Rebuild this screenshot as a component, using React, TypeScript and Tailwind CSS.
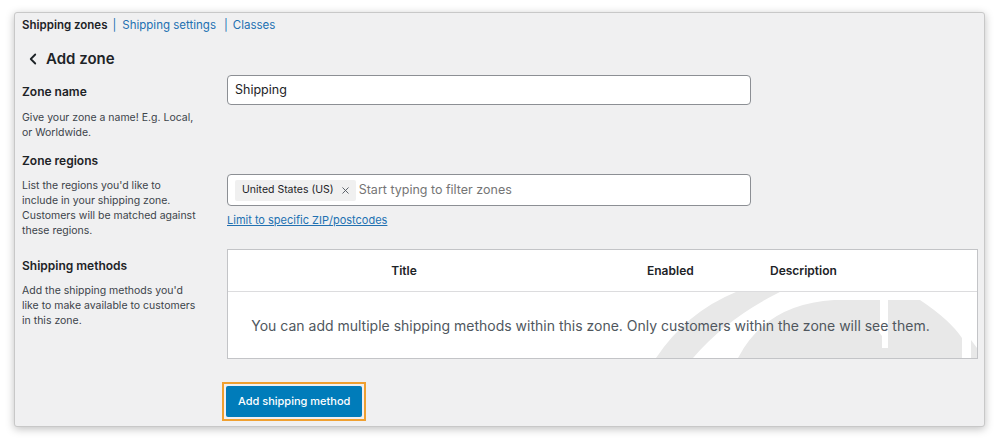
import { ChevronLeft, X } from 'lucide-react'

const font = { fontFamily: 'Inter, "Noto Sans", sans-serif' }

function Watermark() {
  // faint shipping globe behind the empty-state text, coords relative to table body
  return (
    <svg
      className="absolute inset-0 h-full w-full pointer-events-none"
      viewBox="0 0 749 66"
      preserveAspectRatio="none"
    >
      <g fill="#e8e8e8">
        <path d="M428 66 Q460 18 513 -2 L556 -2 Q500 25 465 66 Z" />
        <path d="M510 66 Q538 12 606 8 L652 8 L652 30 Q648 38 654 44 L654 56 L660 56 L660 8 L692 8 Q722 28 734 46 L734 66 Z" />
        <path d="M743 48 L749 56 L749 66 L743 66 Z" />
      </g>
    </svg>
  )
}

export default function App() {
  return (
    <div className="w-[1000px] h-[438px] bg-white pt-3 pl-[14px] text-[#1d2327]" style={font}>
      <div className="w-[971px] h-[415px] bg-[#f0f0f1] border border-[#c8c8c8] rounded-[3px] shadow-[0_2px_8px_rgba(0,0,0,0.25)] pl-[7px] pr-[7px]">
        <div className="flex items-center h-[24px] text-[11.5px] pt-[1px]">
          <span className="font-semibold">Shipping zones</span>
          <span className="ml-[5px] mr-[6px] text-[#2271b1]">|</span>
          <span className="text-[#2271b1]">Shipping settings</span>
          <span className="ml-[8px] mr-[5px] text-[#2271b1]">|</span>
          <span className="text-[#2271b1]">Classes</span>
        </div>

        <div className="flex items-center mt-[11px] h-[22px]">
          <ChevronLeft size={18} strokeWidth={2.4} className="ml-[2px] text-[#1d2327]" />
          <span className="ml-[4px] text-[15px] font-semibold">Add zone</span>
        </div>

        <div className="flex mt-[5px]">
          <div className="w-[205px] shrink-0">
            <div className="text-[12px] font-semibold leading-[18px] mt-[8px]">Zone name</div>
            <p className="text-[10.5px] leading-[15px] mt-[9px] text-[#3c434a]">
              Give your zone a name! E.g. Local,<br />or Worldwide.
            </p>
            <div className="text-[12px] font-semibold leading-[18px] mt-[12px]">Zone regions</div>
            <p className="text-[10.5px] leading-[15px] mt-[8px] text-[#3c434a]">
              List the regions you'd like to<br />include in your shipping zone.<br />Customers will be matched against<br />these regions.
            </p>
            <div className="text-[12px] font-semibold leading-[18px] mt-[19px]">Shipping methods</div>
            <p className="text-[10.5px] leading-[15px] mt-[8px] text-[#3c434a]">
              Add the shipping methods you'd<br />like to make available to customers<br />in this zone.
            </p>
          </div>

          <div className="flex-1">
            <div className="w-[524px] h-[30px] bg-white border border-[#8c8f94] rounded-[4px] flex items-center px-[7px] text-[12.5px]">
              Shipping
            </div>

            <div className="mt-[69px] w-[524px] h-[32px] bg-white border border-[#8c8f94] rounded-[4px] flex items-center px-[7px]">
              <span className="flex items-center h-[21px] bg-[#f0f0f0] rounded-[2px] pl-[7px] pr-[5px] text-[10.5px]">
                United States (US)
                <X size={11} strokeWidth={2} className="ml-[6px] text-[#50575e]" />
              </span>
              <span className="ml-[3px] text-[12.5px] text-[#757575]">Start typing to filter zones</span>
            </div>
            <div className="mt-[7px] text-[11px] text-[#2271b1] underline leading-[14px]">
              Limit to specific ZIP/postcodes
            </div>

            <div className="mt-[22px] w-[751px] bg-white border border-[#c3c4c7]">
              <div className="grid grid-cols-[352px_190px_1fr] h-[42px] items-center border-b border-[#dcdcde] text-[12px] font-semibold">
                <div className="text-center">Title</div>
                <div className="pl-[67px]">Enabled</div>
                <div>Description</div>
              </div>
              <div className="relative h-[66px] flex items-center justify-center pr-[24px] overflow-hidden">
                <Watermark />
                <span className="relative text-[14px] text-[#50575e]">
                  You can add multiple shipping methods within this zone. Only customers within the zone will see them.
                </span>
              </div>
            </div>

            <div className="mt-[23px] ml-[-5px] inline-flex p-[2px] border-2 border-[#f0a030]">
              <button className="h-[31px] px-[12px] bg-[#007cba] text-white text-[11px] font-medium rounded-[2px]">
                Add shipping method
              </button>
            </div>
          </div>
        </div>
      </div>
    </div>
  )
}
